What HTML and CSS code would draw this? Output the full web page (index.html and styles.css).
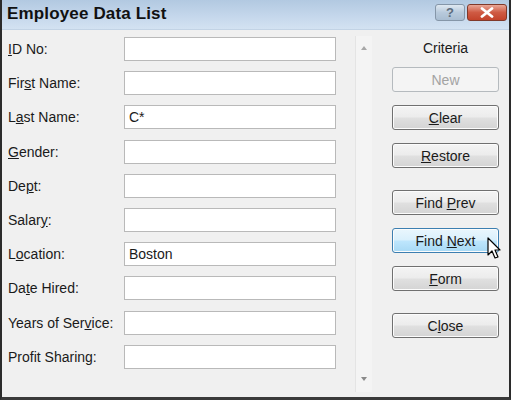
FILE: index.html
```html
<!DOCTYPE html>
<html lang="en">
<head>
    <meta charset="UTF-8">
    <title>Employee Data List</title>
    <link rel="stylesheet" href="styles.css">
</head>
<body>

<div class="window">
    <div class="title-bar">
        <span class="title">Employee Data List</span>
        <div class="title-buttons">
            <span class="tb-btn help">?</span>
            <span class="tb-btn close">
                <svg width="16" height="11" viewBox="0 0 16 11"><path d="M3 1.5 L13 9.5 M13 1.5 L3 9.5" stroke="#fff" stroke-width="2.8" stroke-linecap="round"/></svg>
            </span>
        </div>
    </div>

    <div class="dialog">
        <div class="fields">
            <div class="row"><label><u>I</u>D No:</label><input type="text"></div>
            <div class="row"><label>Fir<u>s</u>t Name:</label><input type="text"></div>
            <div class="row"><label>L<u>a</u>st Name:</label><input type="text" value="C*"></div>
            <div class="row"><label><u>G</u>ender:</label><input type="text"></div>
            <div class="row"><label>De<u>p</u>t:</label><input type="text"></div>
            <div class="row"><label>Salar<u>y</u>:</label><input type="text"></div>
            <div class="row"><label>L<u>o</u>cation:</label><input type="text" value="Boston"></div>
            <div class="row"><label>Da<u>t</u>e Hired:</label><input type="text"></div>
            <div class="row"><label>Years of Ser<u>v</u>ice:</label><input type="text"></div>
            <div class="row"><label>Profit Sharing:</label><input type="text"></div>
        </div>

        <div class="scrollbar">
            <span class="arrow up"></span>
            <span class="arrow down"></span>
        </div>

        <div class="actions">
            <div class="criteria">Criteria</div>
            <button class="btn" disabled>New</button>
            <button class="btn"><u>C</u>lear</button>
            <button class="btn"><u>R</u>estore</button>
            <button class="btn group">Find <u>P</u>rev</button>
            <button class="btn hover">Find <u>N</u>ext</button>
            <button class="btn"><u>F</u>orm</button>
            <button class="btn group">C<u>l</u>ose</button>
        </div>
    </div>

    <svg class="cursor" width="16" height="24" viewBox="0 0 16 24">
        <path d="M1 1 L1 18 L5 14 L8 21 L11 20 L8 13 L13 13 Z" fill="#fff" stroke="#000" stroke-width="1.2" stroke-linejoin="round"/>
    </svg>
</div>

</body>
</html>
```

FILE: styles.css
```css
body {
    margin: 0;
    padding: 0;
    background: #f0f0f0;
    font-family: 'Liberation Sans', Arial, sans-serif;
}

.window {
    position: relative;
    width: 511px;
    height: 400px;
    box-sizing: border-box;
    border-left: 2px solid #2b2b2b;
    border-right: 2px solid #2b2b2b;
    border-bottom: 3px solid #3a3a3a;
    background: #f0f0f0;
    overflow: hidden;
}

.title-bar {
    height: 30px;
    display: flex;
    align-items: flex-start;
    justify-content: space-between;
    background: linear-gradient(#b2c9e1, #c6d8ec 60%, #d3e2f2);
    border-bottom: 1px solid #c2d3e5;
    box-sizing: border-box;
}

.title {
    font-size: 17px;
    font-weight: bold;
    color: #111;
    padding-left: 5px;
    margin-top: 4px;
    letter-spacing: 0.15px;
}

.title-buttons {
    display: flex;
    gap: 2px;
    margin-right: 2px;
    margin-top: 4px;
}

.tb-btn {
    width: 30px;
    height: 17px;
    border-radius: 3px;
    display: flex;
    align-items: center;
    justify-content: center;
    box-sizing: border-box;
}

.tb-btn.help {
    background: linear-gradient(#dfe8f1, #b8cadc 50%, #a9bdd1);
    border: 1px solid #8596a8;
    color: #5c6c7c;
    font-size: 13px;
    font-weight: bold;
}

.tb-btn.close {
    width: 40px;
    background: linear-gradient(#e9a797, #cf5a43 50%, #c3432b);
    border: 1px solid #80392a;
}

.dialog {
    display: flex;
    padding-top: 7px;
}

.fields {
    display: flex;
    flex-direction: column;
    gap: 10.2px;
    padding-left: 6px;
}

.row {
    display: flex;
    align-items: center;
    height: 24px;
}

.row label {
    width: 116px;
    font-size: 14px;
    color: #1a1a1a;
}

.row input {
    width: 212px;
    height: 24px;
    box-sizing: border-box;
    border: 1px solid #b9b9b9;
    background: #fff;
    font-family: inherit;
    font-size: 14px;
    padding: 0 4px;
    color: #1a1a1a;
    outline: none;
}

.scrollbar {
    width: 17px;
    height: 356px;
    margin-left: 19px;
    margin-top: -1px;
    display: flex;
    flex-direction: column;
    justify-content: space-between;
    align-items: center;
    padding: 10px 0 11px;
    box-sizing: border-box;
    background: #f4f4f4;
    border-left: 1px solid #e4e4e4;
}

.arrow {
    width: 0;
    height: 0;
    border-left: 3.5px solid transparent;
    border-right: 3.5px solid transparent;
}

.arrow.up {
    border-bottom: 4px solid #a7a7a7;
}

.arrow.down {
    border-top: 4px solid #8a8a8a;
}

.actions {
    display: flex;
    flex-direction: column;
    margin-left: 20px;
    width: 107px;
}

.criteria {
    text-align: center;
    font-size: 14px;
    color: #1a1a1a;
    height: 17px;
    margin-top: 3px;
    margin-bottom: 10px;
}

.btn {
    height: 25px;
    margin-bottom: 13px;
    border: 1px solid #707070;
    border-radius: 3px;
    background: linear-gradient(#f4f4f4, #ececec 48%, #e0e0e0 52%, #d4d4d4);
    font-family: inherit;
    font-size: 14px;
    color: #1a1a1a;
    padding: 0;
    box-shadow: inset 0 0 0 1px #fcfcfc;
}

.btn.group {
    margin-top: 9px;
}

.btn:disabled {
    border-color: #b5babe;
    background: #f4f4f4;
    color: #a3a3a3;
    box-shadow: none;
}

.btn.hover {
    border-color: #3c7fb1;
    background: linear-gradient(#eaf6fd, #d9f0fc 48%, #bee6fd 52%, #a7d9f5);
}

.cursor {
    position: absolute;
    left: 485px;
    top: 237px;
}
```
